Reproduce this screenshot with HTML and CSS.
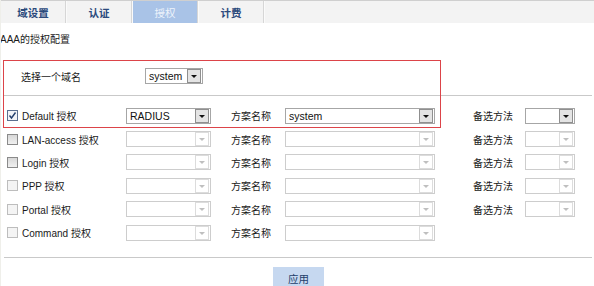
FILE: index.html
```html
<html>
<head>
<title>AAA的授权配置</title>
<link rel="stylesheet" href="styles.css">
</head>
<body>
<div class="tabs">
  <div class="tab">域设置</div>
  <div class="tab">认证</div>
  <div class="tab active">授权</div>
  <div class="tab">计费</div>
</div>

<div class="title">AAA的授权配置</div>

<div class="domain">
  <span class="dlbl">选择一个域名</span>
  <div class="sel w-domain"><span class="val">system</span><span class="btn"></span></div>
</div>
<div class="rule top"></div>

<div class="rows">
  <div class="row">
    <span class="chk on"><svg width="9" height="9" viewBox="0 0 9 9"><path d="M1.5 4.5 L3.5 7 L7.5 1.5" fill="none" stroke="#24406e" stroke-width="1.4"/></svg></span>
    <span class="lbl">Default 授权</span>
    <div class="sel w-method"><span class="val">RADIUS</span><span class="btn"></span></div>
    <span class="lbl2">方案名称</span>
    <div class="sel w-scheme"><span class="val">system</span><span class="btn"></span></div>
    <span class="lbl3">备选方法</span>
    <div class="sel w-backup"><span class="val"></span><span class="btn"></span></div>
  </div>
  <div class="row">
    <span class="chk"></span>
    <span class="lbl">LAN-access 授权</span>
    <div class="sel off w-method"><span class="val"></span><span class="btn"></span></div>
    <span class="lbl2">方案名称</span>
    <div class="sel off w-scheme"><span class="val"></span><span class="btn"></span></div>
    <span class="lbl3">备选方法</span>
    <div class="sel off w-backup"><span class="val"></span><span class="btn"></span></div>
  </div>
  <div class="row">
    <span class="chk"></span>
    <span class="lbl">Login 授权</span>
    <div class="sel off w-method"><span class="val"></span><span class="btn"></span></div>
    <span class="lbl2">方案名称</span>
    <div class="sel off w-scheme"><span class="val"></span><span class="btn"></span></div>
    <span class="lbl3">备选方法</span>
    <div class="sel off w-backup"><span class="val"></span><span class="btn"></span></div>
  </div>
  <div class="row">
    <span class="chk dis"></span>
    <span class="lbl">PPP 授权</span>
    <div class="sel off w-method"><span class="val"></span><span class="btn"></span></div>
    <span class="lbl2">方案名称</span>
    <div class="sel off w-scheme"><span class="val"></span><span class="btn"></span></div>
    <span class="lbl3">备选方法</span>
    <div class="sel off w-backup"><span class="val"></span><span class="btn"></span></div>
  </div>
  <div class="row">
    <span class="chk dis"></span>
    <span class="lbl">Portal 授权</span>
    <div class="sel off w-method"><span class="val"></span><span class="btn"></span></div>
    <span class="lbl2">方案名称</span>
    <div class="sel off w-scheme"><span class="val"></span><span class="btn"></span></div>
    <span class="lbl3">备选方法</span>
    <div class="sel off w-backup"><span class="val"></span><span class="btn"></span></div>
  </div>
  <div class="row">
    <span class="chk dis"></span>
    <span class="lbl">Command 授权</span>
    <div class="sel off w-method"><span class="val"></span><span class="btn"></span></div>
    <span class="lbl2">方案名称</span>
    <div class="sel off w-scheme"><span class="val"></span><span class="btn"></span></div>
  </div>
</div>

<div class="rule bottom"></div>
<div class="apply">应用</div>

<div class="mark"></div>
</body>
</html>
```

FILE: styles.css
```css
body {
    margin: 0;
    background: #fff;
    font-family: "Liberation Sans", "Noto Sans CJK SC", sans-serif;
    font-size: 10px;
    color: #1a1a1a;
    position: relative;
    border-left: 1px solid #efefea;
    height: 286px;
    box-sizing: border-box;
}
.tabs {
    display: flex;
    height: 23px;
    box-sizing: border-box;
    background: #f3f3f3;
    border-top: 1px solid #cfcfcf;
}
.tab {
    width: 64px;
    border-right: 1px solid #d6d6d6;
    box-shadow: 1px 0 0 #fafafa;
    margin-right: 1px;
    display: flex;
    align-items: center;
    justify-content: center;
    color: #2b4a7c;
    font-size: 10.5px;
    font-weight: bold;
}
.tab.active {
    background: #a9c3e7;
    color: #eef3fb;
    font-weight: normal;
}
.title {
    margin-top: 9px;
    line-height: 16px;
    margin-left: -1px;
}
.domain {
    display: flex;
    align-items: center;
    height: 32px;
    margin-top: 12px;
    margin-bottom: 3px;
    padding-left: 20px;
}
.dlbl {
    width: 124px;
}
.rule {
    height: 1px;
    background: #c9c9c9;
    margin: 0 2px 0 3px;
}
.rows {
    padding-top: 8px;
}
.row {
    display: flex;
    align-items: center;
    height: 23.4px;
    padding-left: 6px;
}
.chk {
    width: 9px;
    height: 9px;
    border: 1px solid #8a8a8a;
    background: linear-gradient(#d8d8d8, #f0f0f0);
    margin-right: 4px;
    display: flex;
    align-items: center;
    justify-content: center;
}
.chk.on {
    border-color: #5b6f8f;
    background: #f2f4f8;
}
.chk.dis {
    border-color: #bdbdbd;
    background: #f4f4f4;
}
.lbl {
    width: 104px;
}
.lbl2 {
    width: 54px;
    margin-left: 20px;
}
.lbl3 {
    width: 52px;
    margin-left: 38px;
}
.sel {
    display: flex;
    align-items: center;
    height: 16px;
    box-sizing: border-box;
    border: 1px solid #a6a6a6;
    background: #fff;
}
.sel .val {
    flex: 1;
    padding-left: 3px;
    font-size: 10.5px;
    color: #111;
}
.sel .btn {
    width: 12px;
    height: 12px;
    margin-right: 1px;
    border: 1px solid #8f8f8f;
    background: #e4e4e4;
    position: relative;
}
.sel .btn::after {
    content: "";
    position: absolute;
    left: 3px;
    top: 5px;
    border-left: 3px solid transparent;
    border-right: 3px solid transparent;
    border-top: 3px solid #111;
}
.sel.off {
    border-color: #cdcdcd;
}
.sel.off .btn {
    border-color: #dcdcdc;
    background: #fff;
}
.sel.off .btn::after {
    border-top-color: #bfbfbf;
}
.w-domain {
    width: 58px;
}
.w-method {
    width: 85px;
}
.w-scheme {
    width: 150px;
}
.w-backup {
    width: 50px;
}
.rule.bottom {
    margin-top: 13px;
}
.apply {
    width: 51px;
    height: 22px;
    margin: 9px 0 0 272px;
    background: #c6d8f0;
    color: #233f6b;
    font-size: 10.5px;
    display: flex;
    align-items: center;
    justify-content: center;
}
.mark {
    position: absolute;
    left: 2px;
    top: 60px;
    width: 438px;
    height: 68px;
    box-sizing: border-box;
    border: 1px solid #dc4449;
}
```
